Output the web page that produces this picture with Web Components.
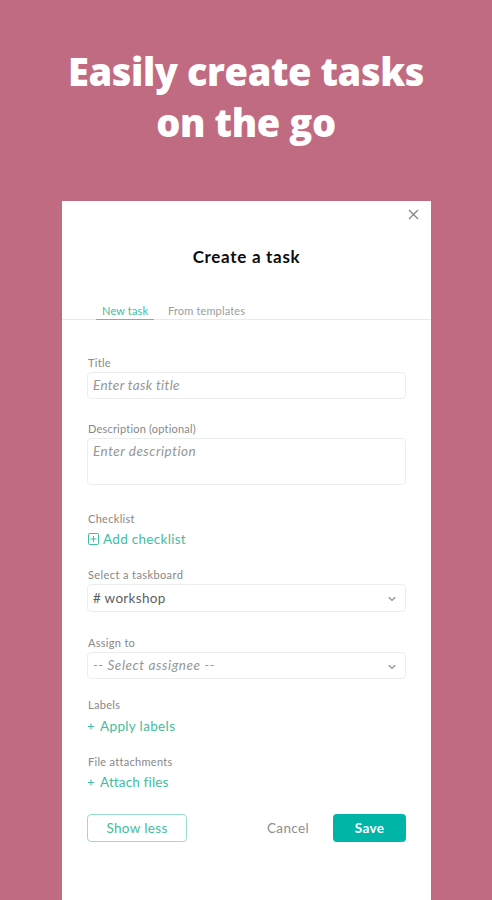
<!DOCTYPE html>
<html lang="en">
<head>
<meta charset="utf-8">
<title>Create a task</title>
<style>
  body {
    margin: 0;
    background: #c16b82;
    font-family: Lato, "Open Sans", sans-serif;
  }
</style>
</head>
<body>
<promo-screen>
  <span slot="headline">Easily create tasks<br>on the go</span>
  <task-dialog></task-dialog>
</promo-screen>

<script>
  class PromoScreen extends HTMLElement {
    connectedCallback() {
      this.attachShadow({ mode: 'open' });
      this.shadowRoot.innerHTML = `
        <style>
          :host {
            display: flex;
            flex-direction: column;
            height: 900px;
            overflow: hidden;
          }
          h1 {
            flex: none;
            box-sizing: border-box;
            height: 201px;
            margin: 0;
            padding-top: 46px;
            color: #fff;
            font-family: "Open Sans", sans-serif;
            font-size: 38px;
            font-weight: 800;
            line-height: 51px;
            letter-spacing: -0.4px;
            text-align: center;
          }
        </style>
        <h1><slot name="headline"></slot></h1>
        <slot></slot>
      `;
    }
  }

  class TaskTabs extends HTMLElement {
    connectedCallback() {
      this.attachShadow({ mode: 'open' });
      this.shadowRoot.innerHTML = `
        <style>
          :host {
            display: flex;
            gap: 8px;
            padding-left: 34px;
            border-bottom: 1px solid #e9ebeb;
            font-size: 11px;
            line-height: 17px;
            letter-spacing: 0.15px;
            color: #999e9e;
          }
          span {
            box-sizing: border-box;
            padding: 0 6px;
            white-space: nowrap;
          }
          .active {
            width: 58px;
            margin-bottom: -1px;
            border-bottom: 1px solid #55c5ad;
            color: #3fbd9f;
          }
        </style>
        <span class="active">New task</span>
        <span>From templates</span>
      `;
    }
  }

  class TaskField extends HTMLElement {
    connectedCallback() {
      this.attachShadow({ mode: 'open' });
      this.shadowRoot.innerHTML = `
        <style>
          :host { display: block; }
          .label {
            height: 18px;
            padding-left: 1px;
            font-size: 11px;
            line-height: 18px;
            letter-spacing: var(--label-spacing, 0.3px);
            color: #858888;
          }
        </style>
        <div class="label">${this.getAttribute('label')}</div>
        <slot></slot>
      `;
    }
  }

  class InputBox extends HTMLElement {
    connectedCallback() {
      const chevron = `
        <svg width="8" height="6" viewBox="0 0 8 6" fill="none" stroke="#8f9494" stroke-width="1.3">
          <path d="M0.8 1.2 4 4.4 7.2 1.2"/>
        </svg>`;
      this.attachShadow({ mode: 'open' });
      this.shadowRoot.innerHTML = `
        <style>
          :host {
            display: flex;
            justify-content: space-between;
            box-sizing: border-box;
            height: var(--box-height, 27px);
            padding: 0 9px 0 5px;
            border: 1px solid #eceeee;
            border-radius: 4px;
            font-size: 13.5px;
            line-height: var(--box-line, 25px);
            letter-spacing: var(--box-spacing, 0.35px);
            font-style: italic;
            color: #929797;
          }
          :host([filled]) { font-style: normal; color: #5d6161; }
          svg { margin-top: 11px; }
        </style>
        <span><slot></slot></span>
        ${this.hasAttribute('select') ? chevron : ''}
      `;
    }
  }

  class LinkAction extends HTMLElement {
    connectedCallback() {
      const icons = {
        box: `<svg width="12" height="12" viewBox="0 0 12 12" fill="none" stroke="currentColor">
            <rect x="1.5" y="0.5" width="10" height="11" rx="1"/>
            <path d="M3.5 6h6M6.5 3v6"/>
          </svg>`,
        plus: `<svg width="8" height="12" viewBox="0 0 8 12" fill="none" stroke="currentColor">
            <path d="M1 6.5h6M4 3.5v6"/>
          </svg>`
      };
      this.attachShadow({ mode: 'open' });
      this.shadowRoot.innerHTML = `
        <style>
          :host {
            display: flex;
            align-items: center;
            gap: var(--link-gap, 5px);
            height: var(--link-height, 22px);
            font-size: 13.5px;
            letter-spacing: var(--link-spacing, 0.35px);
            color: #3fbd9f;
          }
        </style>
        ${icons[this.getAttribute('icon')]}
        <span><slot></slot></span>
      `;
    }
  }

  class TaskButton extends HTMLElement {
    connectedCallback() {
      this.attachShadow({ mode: 'open' });
      this.shadowRoot.innerHTML = `
        <style>
          :host { display: block; }
          button {
            width: 100%;
            height: 28px;
            padding: 0;
            border: 1px solid transparent;
            border-radius: 4px;
            background: none;
            font: inherit;
            font-size: 13.5px;
            letter-spacing: 0.35px;
            color: #8b8f8f;
          }
          :host([kind="outline"]) button { border-color: #9adccf; color: #3fbd9f; }
          :host([kind="primary"]) button { background: #00b5a7; color: #fff; font-weight: 700; }
        </style>
        <button type="button"><slot></slot></button>
      `;
    }
  }

  class TaskDialog extends HTMLElement {
    connectedCallback() {
      this.attachShadow({ mode: 'open' });
      this.shadowRoot.innerHTML = `
        <style>
          :host {
            display: flex;
            flex-direction: column;
            flex: 1;
            width: 369px;
            margin-left: 62px;
            background: #fff;
          }
          .top {
            display: flex;
            justify-content: flex-end;
            height: 43px;
            padding: 8px 12px 0 0;
            box-sizing: border-box;
          }
          h2 {
            margin: 0;
            height: 58px;
            font-size: 17px;
            font-weight: 700;
            line-height: 26px;
            letter-spacing: 0.7px;
            text-align: center;
            color: #0c0c0c;
          }
          form {
            display: flex;
            flex-direction: column;
            padding: 34px 25px 0;
          }
          .title { margin-bottom: 21px; }
          .description { --box-height: 47px; --box-spacing: 0.5px; --label-spacing: 0.2px; margin-bottom: 25px; }
          .checklist { --link-gap: 4px; --link-spacing: 0.3px; margin-bottom: 16px; }
          .board { --box-height: 28px; --box-line: 27px; --label-spacing: 0.4px; --box-spacing: 0.3px; margin-bottom: 22px; }
          .assign { --box-spacing: 0.6px; margin-bottom: 17px; }
          .labels { --link-height: 23px; margin-bottom: 16px; }
          .files { --link-spacing: 0.15px; margin-bottom: 21px; }
          .actions { display: flex; }
          .outline { width: 100px; margin-right: auto; }
          .cancel { width: 44px; margin-right: 23px; }
          .save { width: 73px; }
        </style>
        <div class="top">
          <svg width="11" height="11" viewBox="0 0 11 11" fill="none" stroke="#828686" stroke-width="1.3">
            <path d="M1 1l9 9M10 1l-9 9"/>
          </svg>
        </div>
        <h2>Create a task</h2>
        <task-tabs></task-tabs>
        <form>
          <task-field class="title" label="Title">
            <input-box>Enter task title</input-box>
          </task-field>
          <task-field class="description" label="Description (optional)">
            <input-box>Enter description</input-box>
          </task-field>
          <task-field class="checklist" label="Checklist">
            <link-action icon="box">Add checklist</link-action>
          </task-field>
          <task-field class="board" label="Select a taskboard">
            <input-box select filled># workshop</input-box>
          </task-field>
          <task-field class="assign" label="Assign to">
            <input-box select>-- Select assignee --</input-box>
          </task-field>
          <task-field class="labels" label="Labels">
            <link-action icon="plus">Apply labels</link-action>
          </task-field>
          <task-field class="files" label="File attachments">
            <link-action icon="plus">Attach files</link-action>
          </task-field>
          <div class="actions">
            <task-button class="outline" kind="outline">Show less</task-button>
            <task-button class="cancel">Cancel</task-button>
            <task-button class="save" kind="primary">Save</task-button>
          </div>
        </form>
      `;
    }
  }

  customElements.define('promo-screen', PromoScreen);
  customElements.define('task-tabs', TaskTabs);
  customElements.define('task-field', TaskField);
  customElements.define('input-box', InputBox);
  customElements.define('link-action', LinkAction);
  customElements.define('task-button', TaskButton);
  customElements.define('task-dialog', TaskDialog);
</script>
</body>
</html>
